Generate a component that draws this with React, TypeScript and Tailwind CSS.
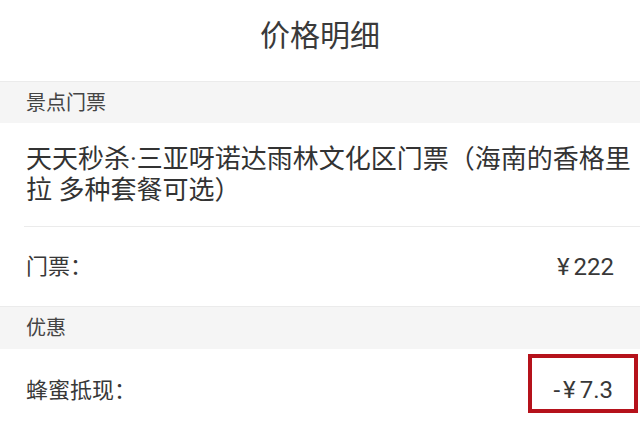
import React from 'react';

const cjk = "font-['Roboto','Noto_Sans_CJK_SC',sans-serif]";

const SectionHeader = ({ label, className }: { label: string; className: string }) => {
  return (
    <div className={`flex items-center bg-[#f5f5f5] border-t border-[#ebebeb] px-[26px] text-[20px] text-[#444] ${className}`}>
      {label}
    </div>
  );
};

const App = () => {
  return (
    <div className={`w-[640px] h-[426px] overflow-hidden bg-white text-[#333] ${cjk}`}>
      <div className="h-[81px] pt-[21px] text-center text-[30px] leading-[30px] text-[#3a3a3a]">价格明细</div>

      <SectionHeader label="景点门票" className="h-[42px]" />

      <div className="pl-[26px] pr-[2px] pt-[21px] pb-[20px] text-[26px] leading-[31px] text-[#333]">
        天天秒杀·三亚呀诺达雨林文化区门票（海南的香格里拉 多种套餐可选）
      </div>
      <div className="ml-[24px] border-t border-[#ebebeb]" />

      <div className="flex h-[79px] items-center justify-between px-[26px] text-[22px] text-[#383838]">
        <span>门票：</span>
        <span className="text-[24px]">
          <span className="mr-[4px]">¥</span>222
        </span>
      </div>

      <SectionHeader label="优惠" className="h-[43px]" />

      <div className="flex h-[78px] justify-between text-[22px] text-[#383838]">
        <span className="self-center pl-[26px] pt-[4px]">蜂蜜抵现：</span>
        <div className="mt-[5px] mr-[2px] flex h-[59px] w-[110px] items-center justify-end border-4 border-[#b5121b] pr-[21px] pt-[13px] pb-0 text-[24px]">
          <span className="leading-[24px]">
            <span className="mr-[3px]">-</span>
            <span className="mr-[4px]">¥</span>7.3
          </span>
        </div>
      </div>
    </div>
  );
};

export default App;
